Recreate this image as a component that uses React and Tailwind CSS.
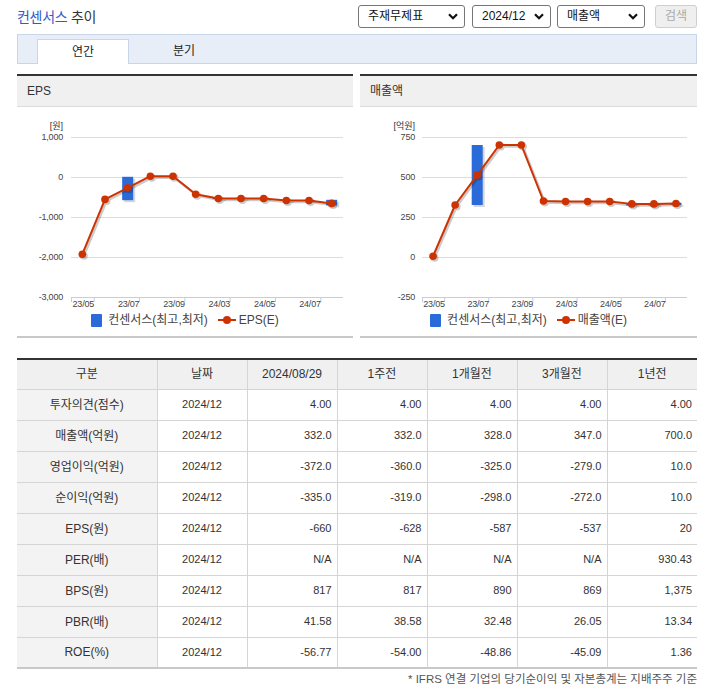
import React from 'react'

const LINE = '#cc3300'
const BLUE = '#2b6bd9'

const eps = {
  width: 336,
  x0: 54,
  x1: 326,
  yOf: (v) => 70 - v * 0.04,
  ticks: [
    [1000, '1,000'],
    [0, '0'],
    [-1000, '-1,000'],
    [-2000, '-2,000'],
    [-3000, '-3,000'],
  ],
  labelRight: 46,
  unit: '[원]',
  line: [-1930, -560, -270, 20, 20, -430, -537, -537, -537, -587, -587, -660],
  bars: { 2: [5, -580], 6: [-522, -552], 7: [-522, -552], 8: [-522, -552], 9: [-572, -600], 10: [-572, -600], 11: [-570, -710] },
  legend: 'EPS(E)',
}

const sales = {
  width: 337,
  x0: 62,
  x1: 327,
  yOf: (v) => 150 - v * 0.16,
  ticks: [
    [750, '750'],
    [500, '500'],
    [250, '250'],
    [0, '0'],
    [-250, '-250'],
  ],
  labelRight: 55,
  unit: '[억원]',
  line: [5, 325, 512, 700, 700, 350, 347, 347, 347, 332, 332, 334],
  bars: { 2: [700, 325], 9: [336, 322], 10: [336, 322], 11: [338, 326] },
  legend: '매출액(E)',
}

const xLabels = ['23/05', '23/07', '23/09', '24/03', '24/05', '24/07']

function Chart({ c }) {
  const step = (c.x1 - c.x0) / 12
  const px = (i) => c.x0 + step * (i + 0.5)
  const pts = c.line.map((v, i) => `${px(i)},${c.yOf(v)}`).join(' ')
  const bottom = c.yOf(c.ticks[4][0])
  return (
    <svg width={c.width} height="204" className="block">
      <text x={c.labelRight} y="22" fontSize="9" fill="#333" textAnchor="end">{c.unit}</text>
      {c.ticks.map(([v, label], i) => (
        <g key={v}>
          <line
            x1={c.x0}
            x2={c.x1}
            y1={c.yOf(v) + 0.5}
            y2={c.yOf(v) + 0.5}
            stroke={i === 4 ? '#c3cee0' : '#dddddd'}
            strokeWidth="1"
          />
          <text x={c.labelRight} y={c.yOf(v) + 3} fontSize="9" fill="#444" textAnchor="end" letterSpacing="-0.2">
            {label}
          </text>
        </g>
      ))}
      {[0, 1, 3, 5, 7, 9, 11].map((k) => (
        <line key={k} x1={c.x0 + step * k + 0.5} x2={c.x0 + step * k + 0.5} y1={bottom} y2={bottom + 5} stroke="#c3cee0" />
      ))}
      {xLabels.map((l, i) => (
        <text key={l} x={px(i * 2) + 1} y="200" fontSize="9" fill="#444" textAnchor="middle" letterSpacing="-0.2">
          {l}
        </text>
      ))}
      {Object.entries(c.bars).map(([i, [hi, lo]]) => (
        <g key={i}>
          <rect x={px(+i) - 5.5 + 2} y={c.yOf(hi) + 2} width="11" height={c.yOf(lo) - c.yOf(hi)} fill="rgba(0,0,0,0.16)" />
          <rect x={px(+i) - 5.5} y={c.yOf(hi)} width="11" height={c.yOf(lo) - c.yOf(hi)} fill={BLUE} />
        </g>
      ))}
      <g transform="translate(1.5,1.5)" opacity="0.2">
        <polyline points={pts} fill="none" stroke="#000" strokeWidth="2.5" />
        {c.line.map((v, i) => (
          <circle key={i} cx={px(i)} cy={c.yOf(v)} r="4" fill="#000" />
        ))}
      </g>
      <polyline points={pts} fill="none" stroke={LINE} strokeWidth="2" strokeLinejoin="round" />
      {c.line.map((v, i) => (
        <circle key={i} cx={px(i)} cy={c.yOf(v)} r="3.8" fill={LINE} />
      ))}
    </svg>
  )
}

function Panel({ title, c }) {
  return (
    <div className="border-t-2 border-b-2 border-t-[#333] border-b-[#c8c8c8]" style={{ width: c.width }}>
      <div className="h-[31px] bg-[#f0f0f0] border-b border-[#dcdcdc] flex items-center pl-[10px] text-[12px] text-[#333]">
        {title}
      </div>
      <Chart c={c} />
      <div className="h-[18px] mb-[7px] flex items-center justify-center text-[12px] text-[#444]">
        <span className="w-[11px] h-[13px] bg-[#2b6bd9] rounded-[1px]" />
        <span className="ml-[6px]">컨센서스(최고,최저)</span>
        <svg width="18" height="10" className="ml-[10px]">
          <line x1="0" x2="18" y1="5" y2="5" stroke={LINE} strokeWidth="2" />
          <circle cx="9" cy="5" r="4" fill={LINE} />
        </svg>
        <span className="ml-[3px]">{c.legend}</span>
      </div>
    </div>
  )
}

function Select({ label, w }) {
  return (
    <div
      className="h-[23px] border border-[#767676] rounded-[3px] bg-white flex items-center justify-between pl-[9px] pr-[6px] text-[12px] text-[#111]"
      style={{ width: w }}
    >
      <span>{label}</span>
      <svg width="10" height="7" viewBox="0 0 10 7">
        <polyline points="1,1.2 5,5.2 9,1.2" fill="none" stroke="#111" strokeWidth="2.2" />
      </svg>
    </div>
  )
}

const rows = [
  ['투자의견(점수)', '4.00', '4.00', '4.00', '4.00', '4.00'],
  ['매출액(억원)', '332.0', '332.0', '328.0', '347.0', '700.0'],
  ['영업이익(억원)', '-372.0', '-360.0', '-325.0', '-279.0', '10.0'],
  ['순이익(억원)', '-335.0', '-319.0', '-298.0', '-272.0', '10.0'],
  ['EPS(원)', '-660', '-628', '-587', '-537', '20'],
  ['PER(배)', 'N/A', 'N/A', 'N/A', 'N/A', '930.43'],
  ['BPS(원)', '817', '817', '890', '869', '1,375'],
  ['PBR(배)', '41.58', '38.58', '32.48', '26.05', '13.34'],
  ['ROE(%)', '-56.77', '-54.00', '-48.86', '-45.09', '1.36'],
]

const heads = ['구분', '날짜', '2024/08/29', '1주전', '1개월전', '3개월전', '1년전']

export default function App() {
  return (
    <div className="w-[701px] h-[690px] bg-white pl-[17px] pr-[4px] font-['Liberation_Sans','Noto_Sans_CJK_KR',sans-serif] text-[#333]">
      <div className="pt-[4px] flex items-center justify-between">
        <div className="text-[14px] mt-[3px] tracking-[-0.3px]">
          <span className="text-[#3358c9]">컨센서스</span> <span className="text-[#333]">추이</span>
        </div>
        <div className="flex items-center">
          <Select label="주재무제표" w={107} />
          <div className="ml-[7px]">
            <Select label="2024/12" w={79} />
          </div>
          <div className="ml-[6px]">
            <Select label="매출액" w={88} />
          </div>
          <div className="ml-[10px] w-[42px] h-[23px] border border-[#cfcfcf] rounded-[3px] bg-[#efefef] text-[12px] text-[#aaa] flex items-center justify-center">
            검색
          </div>
        </div>
      </div>

      <div className="mt-[6px] h-[30px] bg-[#e8eef8] border border-[#c9d5e8] flex items-end pl-[19px] text-[12px] text-[#222]">
        <div className="w-[92px] h-[25px] mb-[-1px] bg-white border border-b-0 border-[#c9d5e8] flex items-center justify-center">
          연간
        </div>
        <div className="w-[92px] h-[25px] ml-[9px] flex items-center justify-center">분기</div>
      </div>

      <div className="mt-[10px] flex gap-[7px]">
        <Panel title="EPS" c={eps} />
        <Panel title="매출액" c={sales} />
      </div>

      <table className="mt-[20px] w-[680px] border-collapse table-fixed border-t-2 border-t-[#333] border-b-2 border-b-[#c8c8c8]">
        <colgroup>
          <col className="w-[140px]" />
          <col className="w-[90px]" />
          <col className="w-[90px]" />
          <col className="w-[90px]" />
          <col className="w-[90px]" />
          <col className="w-[90px]" />
          <col className="w-[90px]" />
        </colgroup>
        <thead>
          <tr className="h-[30px] bg-[#f0f0f0]">
            {heads.map((h, i) => (
              <th
                key={h}
                className={`font-normal text-[12px] text-center border-b border-[#d5d5d5] ${i > 0 ? 'border-l' : ''}`}
              >
                {h}
              </th>
            ))}
          </tr>
        </thead>
        <tbody>
          {rows.map((r, ri) => (
            <tr key={r[0]} className="h-[31px]">
              <td className={`bg-[#f3f3f3] text-center text-[12px] ${ri < rows.length - 1 ? 'border-b' : ''} border-[#d5d5d5]`}>
                {r[0]}
              </td>
              <td className={`text-center text-[11px] border-l ${ri < rows.length - 1 ? 'border-b' : ''} border-[#d5d5d5]`}>
                2024/12
              </td>
              {r.slice(1).map((v, i) => (
                <td
                  key={i}
                  className={`text-right pr-[5px] text-[11px] border-l ${ri < rows.length - 1 ? 'border-b' : ''} border-[#d5d5d5]`}
                >
                  {v}
                </td>
              ))}
            </tr>
          ))}
        </tbody>
      </table>
      <div className="mt-[3px] text-right text-[11.5px] leading-[14px] text-[#555]">
        * IFRS 연결 기업의 당기순이익 및 자본총계는 지배주주 기준
      </div>
    </div>
  )
}
